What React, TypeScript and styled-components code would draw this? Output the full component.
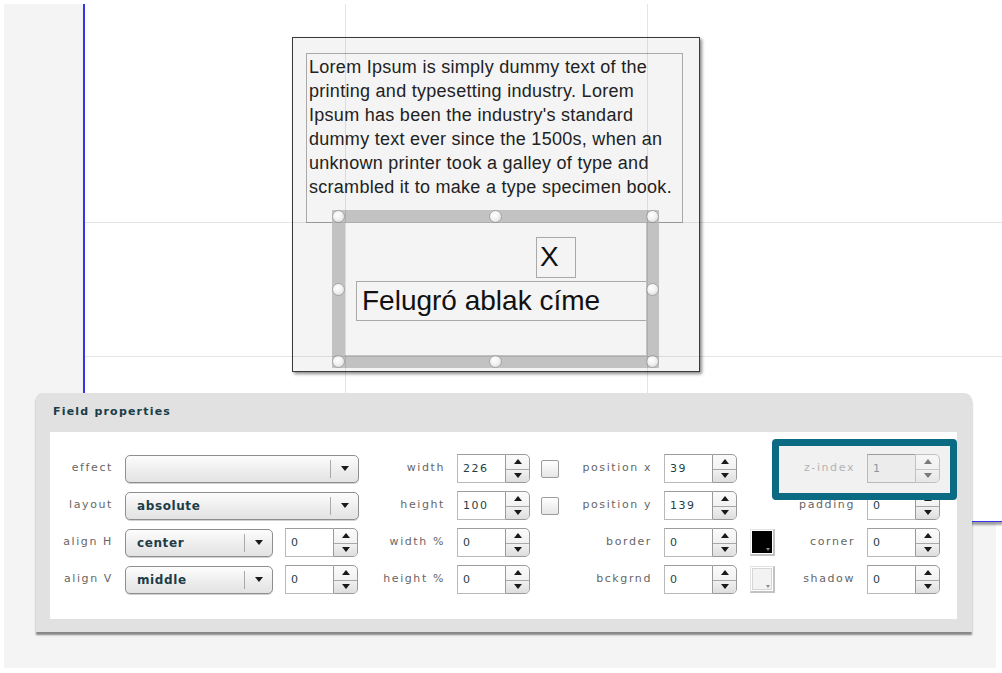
import React from 'react';
import styled, { createGlobalStyle } from 'styled-components';

const GlobalStyle = createGlobalStyle`
  html, body { margin: 0; padding: 0; background: #ffffff; overflow: hidden; }
  body { font-family: "DejaVu Sans", Verdana, sans-serif; }
  *, *::before, *::after { box-sizing: border-box; }
`;

const Stage = styled.div`
  position: relative;
  margin: 4px 6px 5px 4px;
  width: 992px;
  height: 664px;
  background: #f4f4f4;
`;

const Canvas = styled.div`
  position: relative;
  margin-left: 79px;
  margin-right: -8px;
  height: 518px;
  background: #ffffff;
  border-left: 2px solid #3535ee;
  border-bottom: 1px solid #3535ee;
  box-shadow: 0 4px 2px -1px rgba(0, 0, 0, 0.35);
`;

const GuideV = styled.div<{ $x: number }>`
  position: absolute;
  top: 0;
  bottom: 0;
  left: ${(p) => p.$x}px;
  width: 1px;
  background: rgba(0, 0, 0, 0.1);
  pointer-events: none;
`;

const GuideH = styled.div<{ $y: number }>`
  position: absolute;
  left: 0;
  right: 0;
  top: ${(p) => p.$y}px;
  height: 1px;
  background: rgba(0, 0, 0, 0.1);
  pointer-events: none;
`;

const PopupBox = styled.div`
  position: absolute;
  left: 207px;
  top: 33px;
  width: 408px;
  height: 335px;
  background: #f4f4f4;
  border: 1px solid #3a3a3a;
  box-shadow: 2px 2px 3px rgba(0, 0, 0, 0.45);
`;

const TextBlock = styled.div`
  position: absolute;
  left: 13px;
  top: 15px;
  width: 377px;
  height: 170px;
  border: 1px solid #a9a9a9;
  padding: 1px 2px;
  font-family: "Liberation Sans", Arial, sans-serif;
  font-size: 18px;
  line-height: 24px;
  letter-spacing: 0.28px;
  color: #222222;
  white-space: nowrap;
`;

const SelectionWrap = styled.div`
  position: absolute;
  left: 39px;
  top: 172px;
  width: 327px;
  height: 158px;
`;

const Frame = styled.div`
  position: relative;
  width: 100%;
  height: 100%;
  border: 13px solid #c2c2c2;
  overflow: hidden;
`;

const CloseBox = styled.div`
  position: absolute;
  left: 191px;
  top: 14px;
  width: 40px;
  height: 41px;
  border: 1px solid #a9a9a9;
  font-family: "Liberation Sans", Arial, sans-serif;
  font-size: 28px;
  line-height: 38px;
  padding-left: 3px;
  color: #111;
`;

const TitleBox = styled.div`
  position: absolute;
  left: 11px;
  top: 58px;
  width: 300px;
  height: 40px;
  border: 1px solid #a9a9a9;
  padding-left: 5px;
  font-family: "Liberation Sans", Arial, sans-serif;
  font-size: 28px;
  line-height: 38px;
  color: #111;
  white-space: nowrap;
`;

const Handle = styled.div<{ $x: number; $y: number }>`
  position: absolute;
  left: ${(p) => p.$x}px;
  top: ${(p) => p.$y}px;
  width: 13px;
  height: 13px;
  border-radius: 50%;
  border: 1px solid #a5a5a5;
  background: radial-gradient(circle at 40% 35%, #ffffff 0%, #f2f2f2 45%, #d2d2d2 100%);
`;

const Panel = styled.div`
  position: absolute;
  left: 32px;
  top: 389px;
  width: 936px;
  height: 239px;
  background: #e1e1e1;
  border-radius: 6px 8px 0 0;
  box-shadow: 0 3px 2px rgba(0, 0, 0, 0.45);
  display: flex;
  flex-direction: column;
`;

const PanelTitle = styled.div`
  height: 39px;
  padding: 12px 0 0 17px;
  font-size: 11px;
  line-height: 14px;
  font-weight: bold;
  letter-spacing: 1.2px;
  color: #193d47;
`;

const PanelBody = styled.div`
  margin: 0 15px 0 14px;
  height: 187px;
  background: #ffffff;
  padding-top: 22px;
  display: grid;
  grid-template-columns: 75px 234px 98px 102px 105px 111px 92px 73px;
  grid-template-rows: repeat(4, 29px);
  row-gap: 8px;
  align-content: start;
`;

const Label = styled.div<{ $disabled?: boolean }>`
  display: flex;
  align-items: center;
  justify-content: flex-end;
  padding-right: 12px;
  margin-top: -3px;
  font-size: 11px;
  letter-spacing: 1.6px;
  color: ${(p) => (p.$disabled ? '#b3b3b3' : '#666666')};
  white-space: nowrap;
`;

const Group = styled.div<{ $gap?: number }>`
  display: flex;
  align-items: center;
  gap: ${(p) => p.$gap ?? 12}px;
`;

const SelectBox = styled.div<{ $w: number }>`
  position: relative;
  width: ${(p) => p.$w}px;
  height: 28px;
  border: 1px solid #8e8e8e;
  border-radius: 5px;
  background: linear-gradient(#fdfdfd, #ececec 60%, #e3e3e3);
  box-shadow: 0 1px 0 rgba(0, 0, 0, 0.18);
  display: flex;
  align-items: center;
  padding-left: 11px;
`;

const SelectText = styled.span`
  flex: 1;
  font-size: 12px;
  font-weight: bold;
  letter-spacing: 0.6px;
  color: #1c3d48;
`;

const SelectDivider = styled.span`
  width: 1px;
  height: 18px;
  background: #a9a9a9;
`;

const SelectArrowCell = styled.span`
  width: 27px;
  display: flex;
  justify-content: center;
  align-items: center;
`;

const Tri = styled.span<{ $dir: 'up' | 'down'; $size?: number }>`
  width: 0;
  height: 0;
  border-left: ${(p) => p.$size ?? 4}px solid transparent;
  border-right: ${(p) => p.$size ?? 4}px solid transparent;
  ${(p) =>
    p.$dir === 'up'
      ? `border-bottom: ${(p.$size ?? 4) + 1}px solid #1a1a1a;`
      : `border-top: ${(p.$size ?? 4) + 1}px solid #1a1a1a;`}
`;

const NumBox = styled.div<{ $disabled?: boolean }>`
  width: 48px;
  height: 29px;
  border: 1px solid #b9b9b9;
  border-top-color: #9c9c9c;
  border-right: none;
  background: ${(p) => (p.$disabled ? '#ececec' : '#ffffff')};
  display: flex;
  align-items: center;
  padding-left: 5px;
  font-size: 11px;
  letter-spacing: 1.5px;
  color: ${(p) => (p.$disabled ? '#8a9aa2' : '#1d3f4b')};
`;

const Spinner = styled.div<{ $disabled?: boolean }>`
  width: 25px;
  height: 29px;
  border: 1px solid #9a9a9a;
  border-radius: 0 5px 5px 0;
  background: linear-gradient(#fbfbfb, #e9e9e9);
  display: grid;
  grid-template-rows: 1fr 1fr;
  overflow: hidden;
  opacity: ${(p) => (p.$disabled ? 0.55 : 1)};
`;

const SpinHalf = styled.div<{ $bottom?: boolean }>`
  display: flex;
  align-items: center;
  justify-content: center;
  ${(p) =>
    p.$bottom
      ? 'border-top: 1px solid #a8a8a8; background: linear-gradient(#f1f1f1, #dedede);'
      : ''}
`;

const NumWrap = styled.div`
  display: flex;
`;

const Checkbox = styled.div`
  width: 18px;
  height: 18px;
  border: 1px solid #9c9c9c;
  border-radius: 2px;
  background: linear-gradient(#ffffff, #e6e6e6);
`;

const Swatch = styled.div<{ $color: string }>`
  position: relative;
  width: 26px;
  height: 27px;
  border-top: 1px solid #e2e2e2;
  border-left: 1px solid #e2e2e2;
  border-right: 2px solid #c2c2c2;
  border-bottom: 2px solid #c2c2c2;
  padding: 1px;
  &::before {
    content: '';
    display: block;
    width: 100%;
    height: 100%;
    background: ${(p) => p.$color};
    border: 1px solid ${(p) => (p.$color === '#000000' ? '#000' : '#d6d6d6')};
  }
  &::after {
    content: '';
    position: absolute;
    right: 3px;
    bottom: 3px;
    border-left: 2px solid transparent;
    border-right: 2px solid transparent;
    border-top: 3px solid #8a8a8a;
  }
`;

const HighlightCell = styled.div`
  position: relative;
  grid-column: span 2;
  display: grid;
  grid-template-columns: 92px 73px;
`;

const HighlightFrame = styled.div`
  position: absolute;
  left: -3px;
  right: -17px;
  top: -15px;
  bottom: -17px;
  border: 7px solid #0a6b82;
  border-radius: 4px;
  background: #f1f1f1;
  z-index: 1;
`;

const Raised = styled.div`
  position: relative;
  z-index: 2;
  display: flex;
`;

const RaisedLabel = styled(Label)`
  position: relative;
  z-index: 2;
`;

function Select({ w, value }: { w: number; value: string }) {
  return (
    <SelectBox $w={w}>
      <SelectText>{value}</SelectText>
      <SelectDivider />
      <SelectArrowCell>
        <Tri $dir="down" $size={4} />
      </SelectArrowCell>
    </SelectBox>
  );
}

function Num({ value, disabled }: { value: string; disabled?: boolean }) {
  return (
    <NumWrap>
      <NumBox $disabled={disabled}>{value}</NumBox>
      <Spinner $disabled={disabled}>
        <SpinHalf>
          <Tri $dir="up" $size={4} />
        </SpinHalf>
        <SpinHalf $bottom>
          <Tri $dir="down" $size={4} />
        </SpinHalf>
      </Spinner>
    </NumWrap>
  );
}

const handles: Array<[number, number]> = [
  [0, 0],
  [157, 0],
  [314, 0],
  [0, 73],
  [314, 73],
  [0, 145],
  [157, 145],
  [314, 145],
];

export default function App() {
  return (
    <>
      <GlobalStyle />
      <Stage>
        <Canvas>
          <PopupBox>
            <TextBlock>
              Lorem Ipsum is simply dummy text of the
              <br />
              printing and typesetting industry. Lorem
              <br />
              Ipsum has been the industry's standard
              <br />
              dummy text ever since the 1500s, when an
              <br />
              unknown printer took a galley of type and
              <br />
              scrambled it to make a type specimen book.
            </TextBlock>
            <SelectionWrap>
              <Frame>
                <CloseBox>X</CloseBox>
                <TitleBox>Felugró ablak címe</TitleBox>
              </Frame>
              {handles.map(([x, y], i) => (
                <Handle key={i} $x={x} $y={y} />
              ))}
            </SelectionWrap>
          </PopupBox>
          <GuideV $x={260} />
          <GuideV $x={562} />
          <GuideH $y={218} />
          <GuideH $y={352} />
        </Canvas>

        <Panel>
          <PanelTitle>Field properties</PanelTitle>
          <PanelBody>
            <Label>effect</Label>
            <Group>
              <Select w={234} value="" />
            </Group>
            <Label>width</Label>
            <Group $gap={11}>
              <Num value="226" />
              <Checkbox />
            </Group>
            <Label>position x</Label>
            <Group>
              <Num value="39" />
            </Group>
            <HighlightCell>
              <HighlightFrame />
              <RaisedLabel $disabled>z-index</RaisedLabel>
              <Raised>
                <Num value="1" disabled />
              </Raised>
            </HighlightCell>

            <Label>layout</Label>
            <Group>
              <Select w={234} value="absolute" />
            </Group>
            <Label>height</Label>
            <Group $gap={11}>
              <Num value="100" />
              <Checkbox />
            </Group>
            <Label>position y</Label>
            <Group>
              <Num value="139" />
            </Group>
            <Label>padding</Label>
            <Group>
              <Num value="0" />
            </Group>

            <Label>align H</Label>
            <Group>
              <Select w={148} value="center" />
              <Num value="0" />
            </Group>
            <Label>width %</Label>
            <Group>
              <Num value="0" />
            </Group>
            <Label>border</Label>
            <Group $gap={13}>
              <Num value="0" />
              <Swatch $color="#000000" />
            </Group>
            <Label>corner</Label>
            <Group>
              <Num value="0" />
            </Group>

            <Label>align V</Label>
            <Group>
              <Select w={148} value="middle" />
              <Num value="0" />
            </Group>
            <Label>height %</Label>
            <Group>
              <Num value="0" />
            </Group>
            <Label>bckgrnd</Label>
            <Group $gap={13}>
              <Num value="0" />
              <Swatch $color="#f3f3f3" />
            </Group>
            <Label>shadow</Label>
            <Group>
              <Num value="0" />
            </Group>
          </PanelBody>
        </Panel>
      </Stage>
    </>
  );
}
